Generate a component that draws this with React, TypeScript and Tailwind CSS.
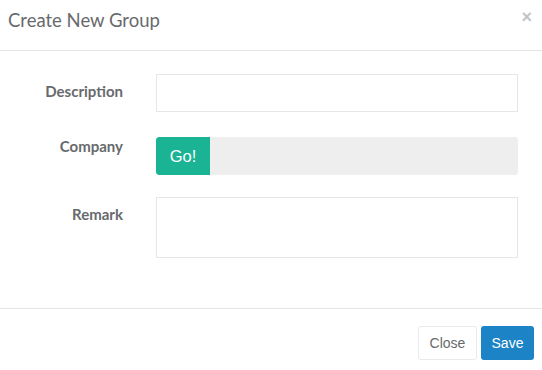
export default function App() {
  return (
    <div className="h-[370px] w-[542px] bg-white text-[#676a6c]">
      <div className="flex h-[51px] items-start justify-between border-b border-[#e5e5e5] pl-[8px] pr-[10px]">
        <h4 className="mt-[8px] font-['Lato',sans-serif] text-[18.5px] leading-[24px] text-[#676a6c]">Create New Group</h4>
        <button className="mt-[7px] font-['Liberation_Sans',sans-serif] text-[18px] font-bold leading-[20px] text-[#c4c4c4]">×</button>
      </div>

      <div className="h-[257px] pt-[23px]">
        <div className="flex items-start">
          <label className="w-[123px] pt-[8px] text-right font-['Lato',sans-serif] text-[15px] font-bold leading-[18px] text-[#676a6c]">
            Description
          </label>
          <input className="ml-[33px] h-[38px] w-[362px] border border-[#e5e6e7] bg-white px-3 outline-none" />
        </div>

        <div className="mt-[25px] flex items-start">
          <label className="w-[123px] text-right font-['Lato',sans-serif] text-[15px] font-bold leading-[18px] text-[#676a6c]">
            Company
          </label>
          <div className="ml-[33px] flex h-[38px] w-[362px] overflow-hidden rounded-[3px] bg-[#eeeeee]">
            <button className="w-[54px] rounded-l-[3px] bg-[#1ab394] font-['Liberation_Sans',sans-serif] text-[16.5px] text-white">
              Go!
            </button>
          </div>
        </div>

        <div className="mt-[22px] flex items-start">
          <label className="w-[123px] pt-[8px] text-right font-['Lato',sans-serif] text-[15px] font-bold leading-[18px] text-[#676a6c]">
            Remark
          </label>
          <textarea className="ml-[33px] h-[61px] w-[362px] resize-none border border-[#e5e6e7] bg-white px-3 outline-none" />
        </div>
      </div>

      <div className="flex justify-end gap-[4px] border-t border-[#e5e5e5] pr-[8px] pt-[17px]">
        <button className="h-[34px] w-[59px] rounded-[3px] border border-[#e7eaec] bg-white font-['Liberation_Sans',sans-serif] text-[14px] text-[#676a6c]">
          Close
        </button>
        <button className="h-[34px] w-[53px] rounded-[3px] bg-[#1c84c6] font-['Liberation_Sans',sans-serif] text-[14px] text-white">
          Save
        </button>
      </div>
    </div>
  );
}
